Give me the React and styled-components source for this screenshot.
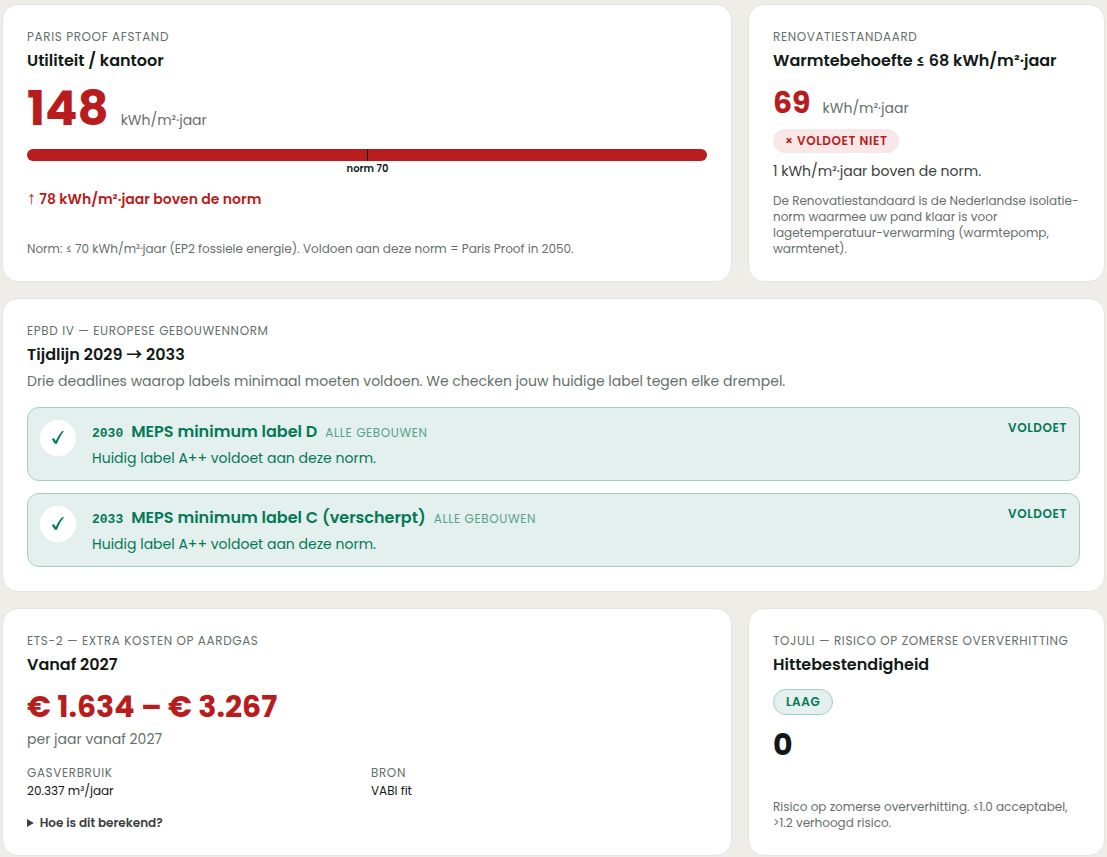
import styled, { createGlobalStyle } from "styled-components";

const GlobalStyle = createGlobalStyle`
  * {
    box-sizing: border-box;
  }

  body {
    margin: 0;
    background-color: #eeede8;
    font-family: Poppins, "Liberation Sans", sans-serif;
    color: #111a16;
  }

  h2, h3, p, dl, dt, dd, ul {
    margin: 0;
    padding: 0;
  }
`;

const colors = {
  red: "#b91c1c",
  redSoft: "#f8e7e7",
  green: "#047857",
  greenSoft: "#e4f0ed",
  greenLine: "#a3cfc2",
  muted: "#66706b",
  text: "#3b3f3d",
};

const Grid = styled.main`
  display: grid;
  grid-template-columns: repeat(12, minmax(0, 1fr));
  gap: 16px;
  padding: 4px 2px 0;
`;

const Card = styled.section`
  grid-column: span ${(props) => props.$span};
  display: flex;
  flex-direction: column;
  align-items: stretch;
  padding: 24px;
  background-color: #fff;
  border: 1px solid #e2e5e1;
  border-radius: 16px;
  @media only screen and (max-width: 768px) {
    grid-column: span 12;
  }
`;

const Eyebrow = styled.p`
  font-size: 12px;
  line-height: 16px;
  letter-spacing: 0.05em;
  text-transform: uppercase;
  color: ${colors.muted};
`;

const Title = styled.h2`
  margin-top: 4px;
  font-size: 16px;
  line-height: 24px;
  font-weight: 600;
`;

const Arrow = styled.span`
  font-family: ${(props) => (props.$up ? '"Liberation Sans"' : '"Noto Sans CJK JP"')}, sans-serif;
  font-size: ${(props) => (props.$up ? "18px" : "16px")};
  line-height: 1;
`;

const Metric = styled.div`
  display: flex;
  align-items: baseline;
  gap: 12px;
  margin-top: 12px;
`;

const Value = styled.span`
  font-size: ${(props) => (props.$large ? "48px" : "30px")};
  line-height: ${(props) => (props.$large ? "48px" : "36px")};
  font-weight: 700;
  color: ${(props) => (props.$bad ? colors.red : "inherit")};
`;

const Unit = styled.span`
  font-size: 14px;
  line-height: 20px;
  color: ${colors.muted};
`;

const Bar = styled.div`
  position: relative;
  height: 12px;
  margin-top: 16px;
  border-radius: 6px;
  background-color: #e8e9e5;
`;

const BarFill = styled.div`
  height: 100%;
  border-radius: 6px;
  background-color: ${colors.red};
`;

const BarMark = styled.div`
  position: absolute;
  top: 0;
  bottom: 0;
  width: 1px;
  background-color: #111a16;
`;

const BarLabel = styled.span`
  position: absolute;
  top: 100%;
  left: 50%;
  transform: translateX(-50%);
  font-size: 10px;
  line-height: 16px;
  font-weight: 600;
  white-space: nowrap;
`;

const Delta = styled.p`
  margin-top: 28px;
  font-size: 14px;
  line-height: 20px;
  font-weight: 600;
  color: ${colors.red};
`;

const Badge = styled.span`
  align-self: flex-start;
  margin-top: ${(props) => (props.$good ? "12px" : "8px")};
  padding: 4px 12px;
  font-size: 12px;
  line-height: 16px;
  font-weight: 600;
  letter-spacing: 0.05em;
  text-transform: uppercase;
  border-radius: 999px;
  border: ${(props) => (props.$good ? `1px solid ${colors.greenLine}` : "none")};
  background-color: ${(props) => (props.$good ? colors.greenSoft : colors.redSoft)};
  color: ${(props) => (props.$good ? colors.green : colors.red)};
`;

const Text = styled.p`
  margin-top: ${(props) => (props.$muted ? "4px" : "8px")};
  font-size: 14px;
  line-height: 20px;
  color: ${(props) => (props.$muted ? colors.muted : colors.text)};
`;

const Note = styled.p`
  margin-top: auto;
  padding-top: 12px;
  font-size: 12px;
  line-height: 16px;
  color: ${colors.muted};
`;

const Timeline = styled.ul`
  display: flex;
  flex-direction: column;
  gap: 12px;
  margin-top: 16px;
  list-style: none;
`;

const Deadline = styled.li`
  display: flex;
  align-items: flex-start;
  gap: 16px;
  padding: 12px;
  border: 1px solid ${colors.greenLine};
  border-radius: 12px;
  background-color: ${colors.greenSoft};
  color: ${colors.green};
`;

const CheckCircle = styled.span`
  display: flex;
  flex: none;
  align-items: center;
  justify-content: center;
  width: 36px;
  height: 36px;
  border-radius: 50%;
  background-color: #fff;
`;

const DeadlineBody = styled.div`
  flex: 1;
  min-width: 0;
`;

const DeadlineHead = styled.div`
  display: flex;
  flex-wrap: wrap;
  align-items: baseline;
  column-gap: 8px;
`;

const Year = styled.span`
  font-family: "Liberation Mono", monospace;
  font-size: 13px;
  font-weight: 700;
`;

const DeadlineTitle = styled.h3`
  font-size: 16px;
  line-height: 24px;
  font-weight: 600;
`;

const Scope = styled.span`
  font-size: 12px;
  letter-spacing: 0.05em;
  text-transform: uppercase;
  opacity: 0.65;
`;

const DeadlineText = styled.p`
  margin-top: 4px;
  font-size: 14px;
  line-height: 20px;
`;

const Status = styled.span`
  font-size: 12px;
  line-height: 16px;
  font-weight: 600;
  letter-spacing: 0.05em;
  text-transform: uppercase;
`;

const Facts = styled.dl`
  display: grid;
  grid-template-columns: 1fr 1fr;
  gap: 8px;
  margin-top: 16px;

  dt {
    font-size: 12px;
    line-height: 16px;
    letter-spacing: 0.05em;
    text-transform: uppercase;
    color: ${colors.muted};
  }

  dd {
    margin-top: 2px;
    font-size: 12px;
    line-height: 16px;
  }
`;

const Details = styled.details`
  margin-top: 16px;
  font-size: 12px;
  line-height: 16px;
  color: ${colors.text};

  summary {
    font-weight: 600;
    cursor: pointer;
  }
`;

const deadlines = [
  { year: "2030", title: "MEPS minimum label D" },
  { year: "2033", title: "MEPS minimum label C (verscherpt)" },
];

function Check() {
  return (
    <svg width="14" height="16" viewBox="0 0 14 16" fill="none" aria-hidden="true">
      <path
        d="M0.8 9.2 L2.8 8 L4.8 11 C6.4 7.2 8.6 3.8 11.3 0.9 L12.9 1.3 C10 4.8 7.8 8.8 5.9 13.7 L3.9 13.7 Z"
        fill={colors.green}
      />
    </svg>
  );
}

const ParisProof = ({ value, norm }) => {
  const max = norm * 2;
  return (
    <Card $span={8}>
      <Eyebrow>Paris Proof afstand</Eyebrow>
      <Title>Utiliteit / kantoor</Title>
      <Metric>
        <Value $large $bad>{value}</Value>
        <Unit>kWh/m²·jaar</Unit>
      </Metric>
      <Bar>
        <BarFill style={{ width: `${Math.min(100, (value / max) * 100)}%` }} />
        <BarMark style={{ left: `${(norm / max) * 100}%` }}>
          <BarLabel>norm {norm}</BarLabel>
        </BarMark>
      </Bar>
      <Delta>
        <Arrow $up>↑</Arrow> {value - norm} kWh/m²·jaar boven de norm
      </Delta>
      <Note>
        Norm: ≤ {norm} kWh/m²·jaar (EP2 fossiele energie). Voldoen aan deze norm = Paris Proof in 2050.
      </Note>
    </Card>
  );
};

const Renovation = () => (
  <Card $span={4}>
    <Eyebrow>Renovatiestandaard</Eyebrow>
    <Title>Warmtebehoefte ≤ 68 kWh/m²·jaar</Title>
    <Metric>
      <Value $bad>69</Value>
      <Unit>kWh/m²·jaar</Unit>
    </Metric>
    <Badge>× Voldoet niet</Badge>
    <Text>1 kWh/m²·jaar boven de norm.</Text>
    <Note>
      De Renovatiestandaard is de Nederlandse isolatie-norm waarmee uw pand klaar is voor
      lagetemperatuur-verwarming (warmtepomp, warmtenet).
    </Note>
  </Card>
);

const EpbdTimeline = () => (
  <Card $span={12}>
    <Eyebrow>EPBD IV — Europese gebouwennorm</Eyebrow>
    <Title>
      Tijdlijn 2029 <Arrow>→</Arrow> 2033
    </Title>
    <Text $muted>
      Drie deadlines waarop labels minimaal moeten voldoen. We checken jouw huidige label tegen elke drempel.
    </Text>
    <Timeline>
      {deadlines.map((item) => (
        <Deadline key={item.year}>
          <CheckCircle>
            <Check />
          </CheckCircle>
          <DeadlineBody>
            <DeadlineHead>
              <Year>{item.year}</Year>
              <DeadlineTitle>{item.title}</DeadlineTitle>
              <Scope>Alle gebouwen</Scope>
            </DeadlineHead>
            <DeadlineText>Huidig label A++ voldoet aan deze norm.</DeadlineText>
          </DeadlineBody>
          <Status>Voldoet</Status>
        </Deadline>
      ))}
    </Timeline>
  </Card>
);

const GasCosts = () => (
  <Card $span={8}>
    <Eyebrow>ETS-2 — extra kosten op aardgas</Eyebrow>
    <Title>Vanaf 2027</Title>
    <Metric>
      <Value $bad>€ 1.634 – € 3.267</Value>
    </Metric>
    <Text $muted>per jaar vanaf 2027</Text>
    <Facts>
      <div>
        <dt>Gasverbruik</dt>
        <dd>20.337 m³/jaar</dd>
      </div>
      <div>
        <dt>Bron</dt>
        <dd>VABI fit</dd>
      </div>
    </Facts>
    <Details>
      <summary>Hoe is dit berekend?</summary>
    </Details>
  </Card>
);

const HeatRisk = () => (
  <Card $span={4}>
    <Eyebrow>TOjuli — risico op zomerse oververhitting</Eyebrow>
    <Title>Hittebestendigheid</Title>
    <Badge $good>Laag</Badge>
    <Metric>
      <Value>0</Value>
    </Metric>
    <Note>Risico op zomerse oververhitting. ≤1.0 acceptabel, &gt;1.2 verhoogd risico.</Note>
  </Card>
);

const App = () => {
  return (
    <>
      <GlobalStyle />
      <Grid>
        <ParisProof value={148} norm={70} />
        <Renovation />
        <EpbdTimeline />
        <GasCosts />
        <HeatRisk />
      </Grid>
    </>
  );
};

export default App;
